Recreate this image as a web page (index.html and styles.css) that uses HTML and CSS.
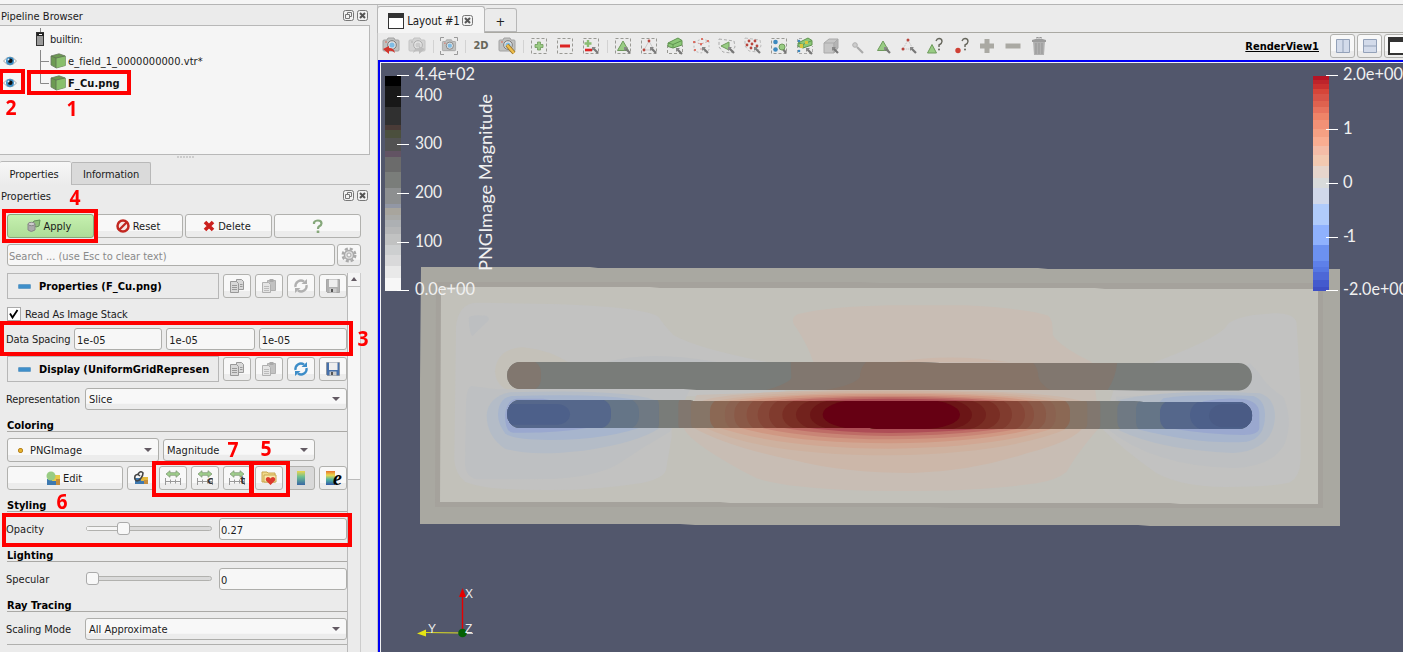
FILE: index.html
```html
<!DOCTYPE html>
<html lang="en">
<head>
<meta charset="utf-8">
<title>ParaView</title>
<link rel="stylesheet" href="styles.css">
</head>
<body>
<svg class="defs" width="0" height="0">
  <defs>
    <linearGradient id="rainbow" x1="0" y1="0" x2="0" y2="1"><stop offset="0" stop-color="#e8702c"/><stop offset=".3" stop-color="#e9d84c"/><stop offset=".6" stop-color="#55b8a0"/><stop offset="1" stop-color="#3158a8"/></linearGradient>
    <linearGradient id="viridis" x1="0" y1="0" x2="0" y2="1"><stop offset="0" stop-color="#ecd44c"/><stop offset=".4" stop-color="#6fc08f"/><stop offset="1" stop-color="#3766a5"/></linearGradient>
    <symbol id="float" viewBox="0 0 11 11"><rect x=".5" y=".5" width="10" height="10" rx="2" fill="#f2f2f2" stroke="#777"/><path d="M4.500 4.500v-2h4v4h-2M2.500 4.500h4v4h-4z" fill="none" stroke="#777"/></symbol>
    <symbol id="close" viewBox="0 0 11 11"><rect x=".5" y=".5" width="10" height="10" rx="2" fill="#f2f2f2" stroke="#777"/><path d="M3 3l5 5M8 3l-5 5" stroke="#555" stroke-width="2"/></symbol>
    <symbol id="eye" viewBox="0 0 14 10"><path d="M.5 5Q7-3 13.500 5Q7 13 .5 5z" fill="#f8fafb" stroke="#a5a7a9"/><circle cx="7" cy="5" r="4" fill="#3b8ec6"/><circle cx="7.300" cy="4.700" r="2.300" fill="#111"/><circle cx="5.500" cy="3.500" r="1" fill="#d7efff"/></symbol>
    <symbol id="cube" viewBox="0 0 16 16"><path d="M1 3L9 .8 15.300 3v9.500l-9 2.500L1 12z" fill="#6c9a52" stroke="#68775f" stroke-width=".8"/><path d="M6 5l9.300-2v9.500L6 15z" fill="#88bf6c"/><path d="M1 3l5 2v10M6 5l9-2" fill="none" stroke="#5d6e54" stroke-width=".8"/></symbol>
    <symbol id="copy" viewBox="0 0 16 16"><g fill="#d8d8d8" stroke="#999"><path d="M7.500 1.500h5l2 2v8h-7z"/><path d="M1.500 3.500h6l2 2v9h-8z"/></g><path d="M3 7.500h5M3 9.500h5M3 11.500h5M11 6.500h2.500M11 8.500h2.500" stroke="#999"/></symbol>
    <symbol id="paste" viewBox="0 0 16 16"><path d="M6.500 2.500h8v10h-8z" fill="#c2c2c2" stroke="#b0b0b0"/><path d="M8.500 1h4v3h-4z" fill="#aaa"/><path d="M1.500 4.500h6l2 2v8h-8z" fill="#e4e4e4" stroke="#b0b0b0"/><path d="M3 8.500h5M3 10.500h5M3 12.500h5" stroke="#bbb"/></symbol>
    <symbol id="cycle" viewBox="0 0 16 16"><path d="M2.500 9a5.500 5.500 0 0 1 8.500-5.500M13.500 7a5.500 5.500 0 0 1-8.500 5.500" fill="none" stroke="currentColor" stroke-width="2.300"/><path d="M8.500 6h5.500V1zM7.500 10H2v5z" fill="currentColor"/></symbol>
    <symbol id="disk" viewBox="0 0 16 16"><path d="M1.500 1.500h13v13h-12l-1-1z" fill="currentColor" stroke="#777" stroke-opacity=".5"/><path d="M4 1.500h8.500V9H4z" fill="#eee"/><path d="M4.500 10.500h7v4h-7z" fill="#ccc"/><path d="M6 11h2v3H6z" fill="#555"/></symbol>
    <symbol id="range" viewBox="0 0 18 16"><path d="M2 4l4-3.300v2h6v-2L16 4l-4 3.300v-2H6v2z" fill="#9fce8c" stroke="#78906d" stroke-width=".7"/><path d="M1.500 8v7M16.500 8v7M1.500 11.500h15M6.500 9.500v4M11.500 9.500v4" fill="none" stroke="#999" stroke-width="1"/></symbol>
    <symbol id="dash" viewBox="0 0 18 18"><rect x="1.500" y="1.500" width="15" height="15" fill="none" stroke="#999994" stroke-dasharray="3 2"/></symbol>
    <symbol id="mag" viewBox="0 0 18 18"><path d="M11 11l5 5" stroke="#777" stroke-width="2.200"/><path d="M10 10h4l-4 4z" fill="#888"/></symbol>
    <symbol id="cam" viewBox="0 0 18 18"><path d="M1 4q0-1 1-1h3l1-2h6l1 2h3q1 0 1 1v9q0 1-1 1H2q-1 0-1-1z" fill="#c0c1c0" stroke="#a2a2a2"/><circle cx="10" cy="8" r="4.300" fill="#e5e5e5" stroke="#777"/><circle cx="10" cy="8" r="2.600" fill="#7ebce5"/><path d="M3 5h2" stroke="#d65"/></symbol>
    <symbol id="slab" viewBox="0 0 18 18"><path d="M2 6l10-5 4 2.500V8l-9 3-5-1.500z" fill="#8bc777" stroke="#609450"/><path d="M2 6l5 1.500 9-4M7 7.500V11" fill="none" stroke="#609450"/></symbol>
  </defs>
</svg>

<div class="topstrip"></div>
<div class="app">
  <aside class="side">
    <div class="dock-title"><span>Pipeline Browser</span><span class="dock-btns"><svg><use href="#float"/></svg><svg><use href="#close"/></svg></span></div>
    <div class="tree">
      <div class="node"><span class="vis"></span><svg class="branch" width="15" height="22"><path d="M4.500 0v4" stroke="#888"/><rect x=".5" y="4.500" width="7" height="13" fill="#9a9a9a" stroke="#333"/><path d="M1 5h7v3H1z" fill="#222"/><path d="M3 6.500h3" stroke="#fff"/></svg><span class="root">builtin:</span></div>
      <div class="node"><span class="vis"><svg><use href="#eye"/></svg></span><svg class="branch" width="15" height="22"><path d="M4.500 0v22M4.500 11.500H13" stroke="#888" fill="none"/></svg><svg class="cube"><use href="#cube"/></svg><span class="t-vtr">e_field_1_0000000000.vtr*</span></div>
      <div class="node"><span class="vis"><svg><use href="#eye"/></svg></span><svg class="branch" width="15" height="22"><path d="M4.500 0v11.500H13" stroke="#888" fill="none"/></svg><svg class="cube"><use href="#cube"/></svg><b class="t-png">F_Cu.png</b></div>
    </div>
    <div class="splitter"></div>
    <div class="tabs"><div class="tab on">Properties</div><div class="tab">Information</div></div>
    <div class="dock-title second"><span>Properties</span><span class="dock-btns"><svg><use href="#float"/></svg><svg><use href="#close"/></svg></span></div>
    <div class="actions">
      <div class="btn apply"><svg width="14" height="14" viewBox="0 0 14 14"><path d="M5 5l2-3 6-1-1 6-3 1z" fill="#8fc07a" stroke="#64905a"/><path d="M1 5v6q3 3 7 0V5z" fill="#aaa" stroke="#888"/><ellipse cx="4.500" cy="5" rx="3.500" ry="1.700" fill="#ccc" stroke="#888"/></svg>Apply</div>
      <div class="btn"><svg width="14" height="14" viewBox="0 0 14 14"><circle cx="7" cy="7" r="5.500" fill="#f4e9e7" stroke="#c22821" stroke-width="2.500"/><path d="M3.500 10.500l7-7" stroke="#c22821" stroke-width="2.300"/></svg>Reset</div>
      <div class="btn"><svg width="12" height="12" viewBox="0 0 12 12"><path d="M2 2l8 8M10 2l-8 8" stroke="#cb211e" stroke-width="3.600"/></svg>Delete</div>
      <div class="btn help"><svg width="12" height="15" viewBox="0 0 12 15"><path d="M2 5V3.500Q3 1.500 6 1.500q3.500 0 3.500 3Q9.500 6 7 7.500 6 8.200 6 10" fill="none" stroke="#86a87b" stroke-width="2.200"/><path d="M4.700 11.500h2.600V14H4.700z" fill="#86a87b"/></svg></div>
    </div>
    <div class="search"><div class="field hint">Search ... (use Esc to clear text)</div><div class="btn gear"><svg width="16" height="16" viewBox="0 0 16 16"><circle cx="8" cy="8" r="6.300" fill="none" stroke="#aaa" stroke-width="2.400" stroke-dasharray="3 1.950"/><circle cx="8" cy="8" r="4.600" fill="#ddd" stroke="#aaa" stroke-width="1.500"/><circle cx="8" cy="8" r="2" fill="#f5f5f5" stroke="#aaa"/></svg></div></div>
    <div class="scroll">
      <div class="form">
        <div class="row head"><div class="group"><i></i><b class="w1">Properties (F_Cu.png)</b></div><div class="btn ic"><svg><use href="#copy"/></svg></div><div class="btn ic"><svg><use href="#paste"/></svg></div><div class="btn ic grey"><svg><use href="#cycle"/></svg></div><div class="btn ic grey"><svg><use href="#disk"/></svg></div></div>
        <div class="row check"><span class="box"><svg width="12" height="12" viewBox="0 0 12 12"><path d="M2 5.500l2.500 4L9.500 2" fill="none" stroke="#000" stroke-width="1.800"/></svg></span><span class="w2">Read As Image Stack</span></div>
        <div class="row spacing"><label>Data Spacing</label><div class="field">1e-05</div><div class="field">1e-05</div><div class="field">1e-05</div></div>
        <div class="row head disp"><div class="group"><i></i><b class="w3">Display (UniformGridRepresen</b></div><div class="btn ic"><svg><use href="#copy"/></svg></div><div class="btn ic"><svg><use href="#paste"/></svg></div><div class="btn ic blue"><svg><use href="#cycle"/></svg></div><div class="btn ic navy"><svg><use href="#disk"/></svg></div></div>
        <div class="row labelled"><label>Representation</label><div class="combo">Slice</div></div>
        <h3>Coloring</h3>
        <div class="row arrays"><div class="combo array"><i></i>PNGImage</div><div class="combo comp">Magnitude</div></div>
        <div class="row maps">
          <div class="btn edit"><svg width="15" height="14" viewBox="0 0 15 14"><path d="M1 8h13v6H1z" fill="#3e79b0"/><path d="M6 4h8v6H6z" fill="#e7c846"/><path d="M10 8h4v6h-4z" fill="#c58d3d"/><circle cx="5" cy="5" r="4.500" fill="#98cc83"/></svg>Edit</div>
          <div class="btn ic"><svg viewBox="0 0 16 16"><path d="M2 8h13v6H2z" fill="#3e79b0"/><path d="M8 7h7v4H8z" fill="#e2b83d"/><path d="M11 10h4v4h-4z" fill="#c58d3d"/><path d="M7 6Q4 3 2 6q-1 4 2 5 2 0 4-3M5 4q3-4 5-1 0 3-2 5" fill="none" stroke="#444" stroke-width="1.600"/></svg></div>
          <div class="btn ic rng"><svg><use href="#range"/></svg></div>
          <div class="btn ic rng"><svg><use href="#range"/></svg><em>c</em></div>
          <div class="btn ic rng"><svg><use href="#range"/></svg><em>t</em></div>
          <div class="btn ic"><svg viewBox="0 0 16 16"><path d="M1 2h5l1 1h7v9H1z" fill="#f0d88a" stroke="#c9a64f"/><path d="M3 5h12v7H3z" fill="#f8e7ab" stroke="#c9a64f"/><path d="M9.500 15L5 10.500q-1-3 2-3.500 1.800 0 2.500 1.500Q10.200 7 12 7q3 .5 2 3.500z" fill="#dc3a2d"/></svg></div>
          <div class="btn ic down"><svg viewBox="0 0 16 16"><rect x="4" y="1" width="8" height="14" fill="url(#viridis)"/></svg></div>
          <div class="btn ic last"><svg viewBox="0 0 16 16"><rect x="2" y="1" width="9" height="14" fill="url(#rainbow)"/></svg><em>e</em></div>
        </div>
        <h3>Styling</h3>
        <div class="row slide"><label>Opacity</label><div class="track"><span class="fill"></span><span class="knob" style="margin-left:30px"></span></div><div class="field">0.27</div></div>
        <h3>Lighting</h3>
        <div class="row slide"><label>Specular</label><div class="track"><span class="knob"></span></div><div class="field">0</div></div>
        <h3>Ray Tracing</h3>
        <div class="row labelled"><label>Scaling Mode</label><div class="combo">All Approximate</div></div>
        <div class="rule"></div>
      </div>
      <div class="scrollbar"><div class="up"></div><div class="handle"></div></div>
    </div>
  </aside>

  <main class="main">
    <div class="layout-tabs">
      <div class="ltab on"><svg width="16" height="16" viewBox="0 0 16 16"><rect x=".5" y=".5" width="15" height="15" fill="#fff" stroke="#333"/><path d="M0 0h16v5H0z" fill="#333"/></svg><span class="w4">Layout #1</span><svg width="11" height="11"><use href="#close"/></svg></div>
      <div class="ltab plus">+</div>
    </div>
    <div class="toolbar">
      <svg class="ti" viewBox="0 0 18 18"><use href="#cam"/><path d="M1 12l6-3v2q5 0 6 5-3-3-6-2v3z" fill="#d2332b"/></svg>
      <svg class="ti faded" viewBox="0 0 18 18"><use href="#cam"/><path d="M17 12l-6-3v2q-5 0-6 5 3-3 6-2v3z" fill="#999"/></svg>
      <i class="sep"></i>
      <svg class="ti" viewBox="0 0 18 18"><use href="#cam" x="1.500" y="2" width="15" height="15"/><path d="M.5 4V.5H4M14 .5h3.500V4M17.500 14v3.500H14M4 17.500H.5V14" fill="none" stroke="#999"/></svg>
      <i class="sep"></i>
      <b class="two-d">2D</b>
      <svg class="ti" viewBox="0 0 18 18"><use href="#cam"/><path d="M9 8l7 8" stroke="#96722b" stroke-width="4"/><path d="M9 8l7 8" stroke="#edbd4b" stroke-width="2.400"/></svg>
      <i class="sep"></i>
      <svg class="ti" viewBox="0 0 18 18"><use href="#dash"/><path d="M7.500 5h3v2.500H13v3h-2.500V13h-3v-2.500H5v-3h2.500z" fill="#99cb83" stroke="#6e9a5c" stroke-width=".8"/></svg>
      <svg class="ti" viewBox="0 0 18 18"><use href="#dash"/><path d="M4 7.500h10v3H4z" fill="#dc2524"/></svg>
      <svg class="ti" viewBox="0 0 18 18"><use href="#dash"/><path d="M6 3v7M2.500 6.500h7" stroke="#8abd72" stroke-width="2.400"/><path d="M3 13h7" stroke="#dc2524" stroke-width="2.600"/><use href="#mag"/></svg>
      <i class="sep"></i>
      <svg class="ti" viewBox="0 0 18 18"><use href="#dash"/><path d="M9 4l5.500 9.500h-11z" fill="#98cc83" stroke="#6e9a5c"/><use href="#mag"/></svg>
      <svg class="ti" viewBox="0 0 18 18"><use href="#dash"/><path d="M9 4l5 9H4z" fill="none" stroke="#ccc"/><g fill="#b9463d"><circle cx="9" cy="4" r="1.400"/><circle cx="4" cy="13" r="1.400"/></g><use href="#mag"/></svg>
      <svg class="ti" viewBox="0 0 18 18"><path d="M1.500 8v8.500h15V8" fill="none" stroke="#999994" stroke-dasharray="3 2"/><use href="#slab"/><use href="#mag" y="1"/></svg>
      <svg class="ti" viewBox="0 0 18 18"><path d="M2 5l8-3 7 2v9l-8 3-7-2z" fill="none" stroke="#bbb" stroke-dasharray="2 2"/><path d="M2 5l7 2 8-3M9 7v8" fill="none" stroke="#c99" stroke-dasharray="2 2"/><g fill="#dc5040"><circle cx="2" cy="5" r="1"/><circle cx="10" cy="2" r="1"/><circle cx="16" cy="4" r="1"/><circle cx="9" cy="7" r="1"/><circle cx="3" cy="13" r="1"/></g><use href="#mag"/></svg>
      <svg class="ti" viewBox="0 0 18 18"><path d="M1 2l15 2 1 6-4 6-8-1-4-5z" fill="none" stroke="#aaa" stroke-dasharray="3 2"/><path d="M3 9l8-4v8z" fill="#98cc83" stroke="#6e9a5c"/><use href="#mag"/></svg>
      <svg class="ti" viewBox="0 0 18 18"><path d="M1 1l15 2 1 6-4 6-8-1-4-5z" fill="none" stroke="#bbb" stroke-dasharray="3 2"/><g fill="#b9463d"><circle cx="5" cy="4" r="1.400"/><circle cx="11" cy="4" r="1.400"/><circle cx="3" cy="8" r="1.400"/><circle cx="8" cy="7" r="1.400"/><circle cx="13" cy="9" r="1.400"/><circle cx="7" cy="11" r="1.400"/></g><use href="#mag"/></svg>
      <svg class="ti" viewBox="0 0 18 18"><use href="#dash"/><circle cx="5.500" cy="5" r="2.300" fill="#3c89bf"/><circle cx="5.500" cy="12.500" r="2.300" fill="#3c89bf"/><path d="M13 12l3 4" stroke="#777" stroke-width="2.400"/><circle cx="12" cy="10" r="3" fill="#98cc83" stroke="#6e9a5c"/></svg>
      <svg class="ti" viewBox="0 0 18 18"><path d="M1.500 8v8.500h15V9M1.500 5V1.500H6" fill="none" stroke="#aaa" stroke-dasharray="3 2"/><use href="#slab"/><path d="M4 7h3v4H4zM9 4h3v3H9z" fill="#d9c53e"/><circle cx="3" cy="14" r="1.300" fill="#3c89bf"/><circle cx="3" cy="4" r="1.300" fill="#3c89bf"/><use href="#mag" y="1"/></svg>
      <svg class="ti" viewBox="0 0 18 18"><path d="M2 6l5-4h9l-4 4v10H2z" fill="#c6c6c6" stroke="#aaa"/><path d="M12 6l4-4v9l-4 5zM2 6h10" fill="#b4b4b4" stroke="#aaa"/><use href="#mag"/></svg>
      <svg class="ti" viewBox="0 0 18 18"><path d="M9 10l6 6" stroke="#aaa" stroke-width="2.200"/><circle cx="7" cy="8" r="2.300" fill="#ccc" stroke="#b0b0b0"/></svg>
      <svg class="ti" viewBox="0 0 18 18"><path d="M9 4l5.500 9.500h-11z" fill="#98cc83" stroke="#6e9a5c"/><use href="#mag"/></svg>
      <svg class="ti" viewBox="0 0 18 18"><path d="M8 3l5 9H3z" fill="none" stroke="#bbb" stroke-dasharray="1 1"/><g fill="#b9463d"><circle cx="8" cy="3" r="1.500"/><circle cx="3" cy="12" r="1.500"/></g><use href="#mag"/></svg>
      <svg class="ti" viewBox="0 0 18 18"><path d="M6 7.500l4.500 8.500h-9z" fill="#98cc83" stroke="#6e9a5c"/><path d="M10 4q1-2.500 3-2.500 3 0 3 3 0 2-3 3.500V10" fill="none" stroke="#66665c" stroke-width="1.400"/><circle cx="13" cy="12.500" r="1" fill="#66665c"/></svg>
      <svg class="ti" viewBox="0 0 18 18"><circle cx="6" cy="13.500" r="2.700" fill="#cf4034"/><path d="M10 4q1-2.500 3-2.500 3 0 3 3 0 2-3 3.500V10" fill="none" stroke="#66665c" stroke-width="1.400"/><circle cx="13" cy="12.500" r="1" fill="#66665c"/></svg>
      <svg class="ti" viewBox="0 0 18 18"><path d="M6.500 2h5v4.500H16v5h-4.500V16h-5v-4.500H2v-5h4.500z" fill="#aaa9a3"/></svg>
      <svg class="ti" viewBox="0 0 18 18"><path d="M1.500 6.500h15v5h-15z" fill="#aaa9a3"/></svg>
      <svg class="ti" viewBox="0 0 18 18"><path d="M3 4h12l-1 14H4z" fill="#b0b0b0"/><path d="M2 3q7-3 14 0v2H2z" fill="#9c9c9c"/><path d="M6 1q3-2 6 0M6 6v11M9 6v11M12 6v11" fill="none" stroke="#959595"/></svg>
      <b class="view-name">RenderView1</b>
      <div class="vbtns">
        <div class="btn vb"><svg width="14" height="14"><path d="M.5.5h13v13H.5zM7 0v14" fill="#d3dbea" stroke="#93a1b8"/></svg></div>
        <div class="btn vb"><svg width="14" height="14"><path d="M.5.5h13v13H.5zM0 7h14" fill="#d3dbea" stroke="#93a1b8"/></svg></div>
        <div class="btn vb max"><svg width="16" height="18"><path d="M1 1h15v16H1z" fill="#fff" stroke="#333" stroke-width="2"/><path d="M0 0h16v5H0z" fill="#333"/></svg></div>
      </div>
    </div>
    <div class="view">
      <svg class="render" viewBox="381 63 1022 589">
        <defs>
          <clipPath id="bar1"><path d="M330 306H1500L1590 309H2486a40 41.500 0 0 1 0 83H2200L2100 390H860L820 387H330a39 40.500 0 0 1 0-81z"/></clipPath>
          <clipPath id="bar2"><path d="M330 420H840L850 423H2170L2200 426H2486a40 40 0 0 1 0 81H1400L1380 504H330a39 42 0 0 1 0-84z"/></clipPath>
        </defs>
        <path d="M421 267H590L598 268H1038L1048 269H1340V526H1150L1138 525H695L680 524H420V380z" fill="#a9a8a1"/>
        <path d="M436 282H860L880 283H1323V508H950L930 507H435z" fill="#a5a29c"/>
        <path d="M441 287H650L660 288H1095L1105 289H1318V504H1180L1170 503H730L720 502H440z" fill="#c2c1ba"/>
        <g transform="translate(410 260) scale(.33333)">
          <path d="M200 128L420 132Q700 140 745 170Q765 200 790 225Q860 265 1070 306L1130 400L785 410V530L768 630Q760 655 700 668Q550 692 400 690Q220 690 165 665Q135 640 133 600L138 200Q145 130 200 128z" fill="#c2c2c1"/>
          <path d="M255 335Q260 265 340 262Q420 270 480 310L320 395Q260 390 255 335z" fill="#c4c1b9"/>
          <path d="M590 306Q720 270 920 306zM176 175Q180 162 230 167Q240 175 235 182L187 228Q178 220 176 175z" fill="#bdbfc1"/>
          <path d="M185 378L260 388H840L780 515Q700 560 620 615Q550 652 420 657L200 658Q165 650 165 610L168 430Q170 380 185 378z" fill="#bec0c2"/>
          <path d="M300 397Q660 385 748 425V505Q680 550 520 572Q360 590 285 566Q230 530 230 465Q235 410 300 397z" fill="#b4bcc7"/>
          <path d="M310 408Q580 400 690 422L720 492Q600 540 420 540Q310 540 285 520Q264 490 264 465Q265 410 310 408z" fill="#a7b5cd"/>
          <path d="M320 416H400L430 422L530 504Q440 520 310 518Q285 518 285 465Q290 420 320 416z" fill="#9aa8cf"/>

          <path d="M2235 306Q2400 245 2445 205Q2460 165 2590 160Q2655 158 2660 190L2672 400V600Q2670 650 2640 667Q2600 680 2450 681Q2320 682 2240 640Q2140 570 2075 505L2110 392z" fill="#c2c2c1"/>
          <path d="M2090 505Q2230 620 2470 624Q2590 620 2625 550Q2650 480 2620 410Q2570 380 2548 340L2520 310L2400 400L2120 410z" fill="#bec0c2"/>
          <path d="M2125 420Q2300 385 2550 400Q2595 415 2595 470Q2590 570 2470 579Q2250 570 2125 510z" fill="#b4bcc7"/>
          <path d="M2180 495L2260 415Q2360 400 2530 408Q2565 420 2565 465Q2565 535 2510 545Q2370 555 2180 507z" fill="#a7b5cd"/>
          <path d="M2280 505L2380 424Q2440 412 2500 417Q2550 425 2548 465V505Q2545 525 2500 525Q2400 525 2280 505z" fill="#9aa8cf"/>

          <path d="M1210 306Q1195 260 1160 205Q1135 175 1165 162Q1260 140 1440 136H1660Q1850 145 1915 167Q1930 180 1928 225Q1950 260 2045 306L2070 500Q2000 580 1970 635Q1940 660 1880 670Q1700 695 1440 693Q1150 690 1040 655Q980 625 940 600Q830 535 820 500L860 405L1250 390z" fill="#c8bdb4"/>
          <path d="M1450 307Q1620 278 1800 307z" fill="#ccb8ab"/>
          <path d="M845 500Q950 560 1150 600Q1300 639 1510 639Q1680 635 1850 580Q2000 540 2020 500V425Q1930 390 1440 390Q950 390 870 425z" fill="#ccb7a9"/>
          <path d="M880 500Q1050 585 1440 586Q1800 580 1975 505V425Q1850 393 1440 393Q1050 393 910 425z" fill="#ceb19f"/>
          <path d="M920 500Q1100 564 1440 566Q1760 562 1930 505V425Q1800 398 1440 398Q1100 398 940 425z" fill="#d1a793"/>
          <path d="M980 500Q1140 549 1440 550Q1710 547 1880 505V425Q1760 402 1440 402Q1130 402 990 425z" fill="#d09883"/>
          <path d="M1040 500Q1190 537 1440 538Q1680 537 1830 505V425Q1700 407 1440 407Q1180 407 1050 425z" fill="#c98576"/>
          <path d="M1100 500Q1250 527 1440 528Q1640 527 1780 505V425Q1660 411 1440 411Q1220 411 1110 425z" fill="#be6c66"/>
          <path d="M1170 500Q1290 518 1440 519Q1600 518 1720 505V425Q1620 416 1440 416Q1290 416 1180 425z" fill="#ae4d56"/>

          <g clip-path="url(#bar1)">
            <path d="M280 300H2540V400H280z" fill="#797c79"/>
            <rect x="240" y="300" width="153" height="94" rx="38" fill="#81776f"/>
            <path d="M1142 300L1144 355Q1130 375 1050 395H2090Q2120 350 2122 300z" fill="#81776f"/>
            <path d="M1375 300Q1350 320 1350 350Q1340 375 1220 395H1930Q1890 375 1885 350Q1885 320 1860 300z" fill="#867468"/>
          </g>
          <g clip-path="url(#bar2)">
            <path d="M280 410H2540V515H280z" fill="#797c79"/>
            <rect x="200" y="410" width="547" height="106" rx="24" fill="#6f7983"/>
            <rect x="200" y="415" width="487" height="94" rx="40" fill="#657587"/>
            <rect x="200" y="417" width="403" height="88" rx="36" fill="#55678b"/>
            <rect x="260" y="432" width="220" height="62" rx="40" ry="31" fill="#4d608a"/>
            <rect x="2122" y="415" width="500" height="102" rx="32" fill="#6f7983"/>
            <rect x="2178" y="415" width="450" height="102" rx="30" fill="#657587"/>
            <rect x="2250" y="420" width="400" height="92" rx="36" fill="#55678b"/>
            <rect x="2340" y="420" width="300" height="90" rx="46" fill="#4d608a"/>
            <rect x="2397" y="432" width="200" height="70" rx="46" ry="35" fill="#4a5b85"/>
            <rect x="805" y="410" width="1266" height="106" rx="22" fill="#81776f"/>
            <rect x="843" y="410" width="1189" height="106" rx="26" fill="#867567"/>
            <rect x="900" y="415" width="1080" height="98" rx="38" fill="#8b6854"/>
            <rect x="945" y="415" width="992" height="98" rx="42" fill="#8b6250"/>
            <rect x="973" y="415" width="935" height="98" rx="45" fill="#8a5947"/>
            <rect x="1010" y="415" width="862" height="98" rx="48" fill="#89503f"/>
            <rect x="1043" y="415" width="802" height="98" rx="52" ry="48" fill="#864637"/>
            <rect x="1077" y="415" width="729" height="98" rx="58" ry="48" fill="#803b2e"/>
            <rect x="1117" y="417" width="653" height="94" rx="66" ry="47" fill="#792e24"/>
            <rect x="1158" y="418" width="570" height="92" rx="75" ry="46" fill="#72221d"/>
            <rect x="1200" y="419" width="486" height="90" rx="85" ry="45" fill="#6b1516"/>
            <rect x="1238" y="420" width="412" height="87" rx="110" ry="43" fill="#660013"/>
          </g>
        </g>
        <g shape-rendering="crispEdges">
          <path d="M385 76h16v10h-16z" fill="#000"/><path d="M385 86h16v21h-16z" fill="#181818"/><path d="M385 107h16v18h-16z" fill="#303030"/><path d="M385 125h16v5h-16z" fill="#4a3b37"/><path d="M385 130h16v8h-16z" fill="#4b4f3d"/><path d="M385 138h16v13h-16z" fill="#525252"/><path d="M385 151h16v6h-16z" fill="#625363"/><path d="M385 157h16v15h-16z" fill="#6b6b6b"/><path d="M385 172h16v16h-16z" fill="#7a7d7a"/><path d="M385 188h16v16h-16z" fill="#8d8f90"/><path d="M385 204h16v4h-16z" fill="#9297a5"/><path d="M385 208h16v7h-16z" fill="#a8a59d"/><path d="M385 215h16v5h-16z" fill="#a9aaa8"/><path d="M385 220h16v7h-16z" fill="#adb0b3"/><path d="M385 227h16v7h-16z" fill="#b6b7b8"/><path d="M385 234h16v11h-16z" fill="#c1c2c2"/><path d="M385 245h16v10h-16z" fill="#cdcfd0"/><path d="M385 255h16v11h-16z" fill="#d9d9da"/><path d="M385 266h16v12h-16z" fill="#e9e9e9"/><path d="M385 278h16v13h-16z" fill="#f7f7f7"/>
          <path d="M1313 76h16v4h-16z" fill="#b61425"/><path d="M1313 80h16v4h-16z" fill="#bd242b"/><path d="M1313 84h16v5h-16z" fill="#c9302f"/><path d="M1313 89h16v5h-16z" fill="#d54539"/><path d="M1313 94h16v7h-16z" fill="#d75347"/><path d="M1313 101h16v6h-16z" fill="#df624f"/><path d="M1313 107h16v6h-16z" fill="#e7725d"/><path d="M1313 113h16v7h-16z" fill="#ee8468"/><path d="M1313 120h16v9h-16z" fill="#f29176"/><path d="M1313 129h16v8h-16z" fill="#f5a083"/><path d="M1313 137h16v9h-16z" fill="#f9ad91"/><path d="M1313 146h16v9h-16z" fill="#f4bca7"/><path d="M1313 155h16v11h-16z" fill="#f2c9b1"/><path d="M1313 166h16v12h-16z" fill="#e6d5cc"/><path d="M1313 178h16v10h-16z" fill="#d9dbdb"/><path d="M1313 188h16v16h-16z" fill="#d1d8ea"/><path d="M1313 204h16v21h-16z" fill="#b0cbfb"/><path d="M1313 225h16v20h-16z" fill="#8fb1fd"/><path d="M1313 245h16v16h-16z" fill="#6c91f0"/><path d="M1313 261h16v6h-16z" fill="#5e80e9"/><path d="M1313 267h16v5h-16z" fill="#5677e2"/><path d="M1313 272h16v8h-16z" fill="#4d68d7"/><path d="M1313 280h16v7h-16z" fill="#445ace"/><path d="M1313 287h16v4h-16z" fill="#3e4fc4"/>
        </g>
        <path d="M397 75.500h12M397 96.500h12M397 144.500h12M397 193.500h12M397 242.500h12M397 290.500h12M1326 75.500h12M1326 129.500h12M1326 183.500h12M1326 237.500h12M1326 290.500h12" stroke="#fff"/>
        <g class="scale">
          <text x="415" y="80" textLength="60" lengthAdjust="spacingAndGlyphs">4.4e+02</text><text x="415" y="101" textLength="27" lengthAdjust="spacingAndGlyphs">400</text><text x="415" y="149" textLength="27" lengthAdjust="spacingAndGlyphs">300</text><text x="415" y="198" textLength="27" lengthAdjust="spacingAndGlyphs">200</text><text x="415" y="247" textLength="27" lengthAdjust="spacingAndGlyphs">100</text><text x="415" y="295" textLength="60" lengthAdjust="spacingAndGlyphs">0.0e+00</text>
          <text x="1343" y="80" textLength="60" lengthAdjust="spacingAndGlyphs">2.0e+00</text><text x="1343" y="134">1</text><text x="1343" y="188">0</text><text x="1343" y="242" textLength="13">-1</text><text x="1343" y="295" textLength="65" lengthAdjust="spacingAndGlyphs">-2.0e+00</text>
          <text transform="translate(492 271) rotate(-90)" textLength="177" lengthAdjust="spacingAndGlyphs">PNGImage Magnitude</text>
        </g>
        <path d="M462.500 633V596" stroke="#e60000" stroke-width="1.400"/><path d="M462.500 588l3.500 9h-7z" fill="#e60000"/><path d="M462 633l-37-.5" stroke="#dddd22"/><path d="M417 633.500l9-4v7z" fill="#e4e414"/><path d="M462 633.500h11" stroke="#ccc"/><circle cx="462.500" cy="633" r="4.300" fill="#046004"/>
        <g class="axes"><text x="465" y="598">X</text><text x="428" y="633">Y</text><text x="465" y="633">Z</text></g>
      </svg>
    </div>
  </main>
</div>

<div class="mark m1"></div><div class="mark m2"></div><div class="mark m3"></div><div class="mark m4"></div><div class="mark m6"></div><div class="mark m7"></div><div class="mark m5"></div>
<b class="num n1">1</b><b class="num n2">2</b><b class="num n3">3</b><b class="num n4">4</b><b class="num n5">5</b><b class="num n6">6</b><b class="num n7">7</b>
</body>
</html>
```
FILE: styles.css
```css
* { box-sizing: border-box; }
body {
  margin: 0;
  width: 1403px;
  height: 652px;
  overflow: hidden;
  position: relative;
  background: #ebebeb;
  color: #1b1b1b;
  font: 11px/14px "DejaVu Sans Condensed", "DejaVu Sans", sans-serif;
  font-stretch: condensed;
  white-space: nowrap;
}
svg { display: block; flex: none; }
.defs { height: 0; }
.topstrip { height: 5px; background: #f5f5f5; border-bottom: 1px solid #b4b4b4; }
.app { display: flex; height: 647px; }
.side { width: 377px; flex: none; overflow: hidden; }
.main { flex: 1; min-width: 0; display: flex; flex-direction: column; border-left: 1px solid #c4c4c4; }

.dock-title { height: 20px; width: 368px; padding: 2px 0 0 1px; display: flex; justify-content: space-between; align-items: center; }
.dock-title > span:first-child { padding-top: 2px; }
.dock-title.second { height: 22px; padding-top: 0; }
.dock-btns { display: flex; gap: 3px; margin-top: -2px; }
.dock-btns svg { width: 11px; height: 11px; }
.tree { height: 130px; width: 370px; border: 1px solid #b8b8b8; border-left: 0; background: #f5f5f5; padding-top: 2px; }
.node { height: 22px; display: flex; align-items: center; }
.node > span:last-child, .node > b { padding-top: 2px; }
.vis { width: 36px; padding-left: 3px; }
.vis svg { width: 14px; height: 10px; }
.root { margin-left: -1px; letter-spacing: -.2px; }
.cube { width: 16px; height: 16px; margin-left: -1px; margin-right: 2px; }
.t-vtr { letter-spacing: .05px; }
.t-png { color: #111; letter-spacing: .1px; }
.splitter { height: 6px; width: 17px; margin-left: 177px; background: radial-gradient(circle at 1px 2px, #bbb 0 .6px, transparent .9px) 0 0 / 3px 6px; }
.tabs { height: 24px; width: 370px; display: flex; align-items: flex-end; border-bottom: 1px solid #bbb; }
.tab { width: 80px; height: 22px; padding-top: 5px; text-align: center; letter-spacing: -.1px; background: #dadada; border: 1px solid #b8b8b8; border-bottom: 0; border-radius: 2px 2px 0 0; }
.tab.on { width: 71px; height: 24px; padding-top: 6px; padding-right: 3px; background: linear-gradient(#f7f7f7, #ebebeb); border-left: 0; border-right: 0; margin-bottom: -1px; }

.btn { display: flex; align-items: center; justify-content: center; border: 1px solid #b1b1ae; border-radius: 3px; background: linear-gradient(#f8f8f8 0 72%, #ececec 74%); }
.actions { display: grid; grid-template-columns: repeat(4, 87px); gap: 2px; padding: 7px 0 0 7px; height: 31px; }
.actions .btn { gap: 3px; height: 24px; padding-top: 2px; padding-right: 3px; }
.actions .btn svg { margin-top: -2px; }
.actions .apply { background: linear-gradient(#c5f0af, #aedd98); border-color: #88a77b; }
.actions .help { padding-right: 0; }
.search { display: flex; gap: 2px; padding: 6px 0 0 7px; }
.search .field { width: 328px; }
.gear { width: 24px; height: 22px; }
.field { height: 22px; border: 1px solid #aeaeab; border-radius: 3px; background: #f7f7f7; padding: 5px 3px 0 2px; line-height: 14px; }
.hint { color: #8a8a8a; padding-left: 1px; letter-spacing: -.02px; }

.scroll { display: flex; margin-top: 7px; height: 379px; }
.form { width: 347px; padding-left: 7px; flex: none; }
.row { display: flex; gap: 4px; align-items: center; }
.row label { padding-top: 2px; }
.head { height: 26px; }
.head .group { width: 212px; height: 26px; border: 1px solid #b7b7b7; display: flex; align-items: center; padding-left: 10px; gap: 8px; color: #000; }
.group i { width: 13px; height: 5px; background: #3f8fca; border: 1px solid #6aa0c8; border-radius: 1px; }
.group b { padding-top: 2px; }
.w1 { letter-spacing: .05px; }
.w3 { letter-spacing: .02px; }
.btn.ic { width: 28px; height: 24px; flex: none; position: relative; }
.ic svg { width: 16px; height: 16px; }
.grey { color: #b0b0b0; }
.blue { color: #3d8dc8; }
.navy { color: #4670ab; }
.check { height: 14px; margin-top: 8px; }
.check .w2 { padding-top: 2px; letter-spacing: -.1px; }
.box { width: 14px; height: 14px; border: 1px solid #aaa; background: #fff; }
.spacing { margin-top: 7px; gap: 4px; }
.spacing label { width: 63px; margin-left: -1px; margin-right: 1px; letter-spacing: -.15px; }
.spacing .field { width: 88px; flex: 1; }
.disp { margin-top: 6px; }
.labelled { margin-top: 6px; }
.labelled label { width: 75px; margin-left: -1px; letter-spacing: -.08px; }
.combo { flex: 1; height: 22px; display: flex; align-items: center; padding: 2px 6px 0 3px; border: 1px solid #aeaeab; border-radius: 3px; background: linear-gradient(#f8f8f8 0 72%, #ececec 74%); }
.combo::after { content: ""; margin-left: auto; margin-top: -2px; border: 4px solid transparent; border-top: 4px solid #635a63; border-bottom: 0; }
.arrays { margin-top: 6px; }
.arrays .combo { flex: none; width: 152px; }
.arrays .array { height: 24px; padding-left: 10px; }
.array i { width: 5px; height: 5px; background: #e9b52e; border: 1px solid #b78422; border-radius: 2px; margin: -2px 7px 0 0; }
.maps { margin-top: 4px; }
.edit { width: 116px; height: 24px; gap: 2px; padding-top: 2px; padding-right: 2px; }
.edit svg { margin-top: -2px; }
.rng svg { width: 18px; height: 16px; }
.ic em { position: absolute; right: 5px; bottom: 1px; font: bold 11px/14px "DejaVu Sans Condensed", sans-serif; color: #333; }
.last svg { margin-left: -2px; }
.last em { font: italic bold 20px/18px "Liberation Serif", serif; color: #000; right: 4px; bottom: 2px; }
.btn.down { background: #d9d9d9; }
h3 { margin: 8px 0 0; height: 14px; font-size: 11px; line-height: 15px; color: #000; letter-spacing: .02px; border-bottom: 1px solid #aaa9a6; }
.slide { margin-top: 6px; gap: 0; }
.slide label { width: 80px; margin-left: -1px; }
.slide .field { width: 128px; margin-left: 7px; padding-left: 1px; }
.track { width: 126px; height: 5px; border: 1px solid #b1b1ae; border-radius: 3px; background: #dadada; display: flex; align-items: center; position: relative; top: -1px; }
.fill { position: absolute; left: 0; width: 34px; height: 3px; background: #f5f5f5; }
.knob { width: 13px; height: 13px; margin-left: -1px; flex: none; position: relative; border: 1px solid #aaa; border-radius: 3px; background: #f8f8f8; }
.rule { margin-top: 4px; height: 1px; background: #b0b0ae; }
.scrollbar { width: 14px; border-left: 1px solid #b9b9b9; border-right: 1px solid #ccc; }
.up { height: 14px; border-bottom: 1px solid #bbb; padding: 4px 0 0 3px; background: #f5f5f5; }
.up::before { content: ""; display: block; width: 0; border: 3.500px solid transparent; border-bottom: 4px solid #635a63; border-top: 0; }
.handle { height: 193px; background: #f6f6f6; border-bottom: 1px solid #bbb; }

.layout-tabs { height: 28px; display: flex; align-items: flex-end; border-bottom: 1px solid #aaa9a3; }
.ltab { height: 24px; width: 32px; border: 1px solid #b7b7b7; border-radius: 3px 3px 0 0; display: flex; align-items: center; justify-content: center; }
.plus { padding-top: 4px; border-left: 0; font-size: 13px; color: #222; }
.ltab.on { width: 108px; height: 27px; background: #f5f5f5; border-bottom: 0; margin-bottom: -1px; gap: 3px; font-size: 11.500px; margin-left: -1px; padding: 1px 1px 0 0; }
.ltab.on svg:last-child { margin-left: -1px; }
.w4 { padding-top: 1px; letter-spacing: -.12px; }
.toolbar { height: 27px; display: flex; align-items: center; padding-bottom: 1px; }
.ti { width: 18px; height: 18px; margin: 0 4px; }
.faded { filter: grayscale(1); opacity: .55; }
.sep { width: 6px; height: 13px; flex: none; background: linear-gradient(#d2d2d2, #d2d2d2) center / 1px 100% no-repeat; }
.two-d { width: 26px; flex: none; text-align: center; color: #66665a; font-size: 11px; }
.view-name { margin-left: auto; padding-top: 2px; color: #000; text-decoration: underline; text-underline-offset: 1px; font-size: 11px; letter-spacing: 0; }
.vbtns { display: flex; gap: 2px; width: 73px; margin-left: 11px; overflow: hidden; }
.vb { width: 25px; height: 24px; flex: none; }
.vb.max { justify-content: flex-start; padding-left: 3px; }
.view { flex: 1; min-height: 0; border-left: 2px solid #0000f5; border-top: 2px solid #0000f5; padding: 1px 0 0 1px; background: #f2f2f2; }
.render { width: 1022px; height: 589px; background: #52576c; }
.scale { font: 16.500px Lato, sans-serif; fill: #f0f0f0; }
.axes { font: 12px "Liberation Sans", sans-serif; fill: #eee; }

/* Callouts over the window */
.mark { position: absolute; border: 4px solid #f00; }
.m1 { left: 27px; top: 70px; width: 104px; height: 25px; }
.m2 { left: -1px; top: 69px; width: 26px; height: 25px; }
.m3 { left: 0; top: 321px; width: 353px; height: 35px; }
.m4 { left: 2px; top: 209px; width: 96px; height: 34px; }
.m6 { left: 2px; top: 513px; width: 350px; height: 34px; }
.m7 { left: 152px; top: 461px; width: 101px; height: 36px; }
.m5 { left: 250px; top: 461px; width: 40px; height: 36px; }
.num { position: absolute; width: 20px; text-align: center; color: #f00; font: bold 21px/24px "Open Sans", sans-serif; transform: scaleX(.92); }
.n1 { left: 62px; top: 96px; }
.n2 { left: 1px; top: 95px; }
.n3 { left: 353px; top: 326px; }
.n4 { left: 65px; top: 185px; }
.n5 { left: 256px; top: 436px; }
.n6 { left: 52px; top: 489px; }
.n7 { left: 223px; top: 437px; }
```
